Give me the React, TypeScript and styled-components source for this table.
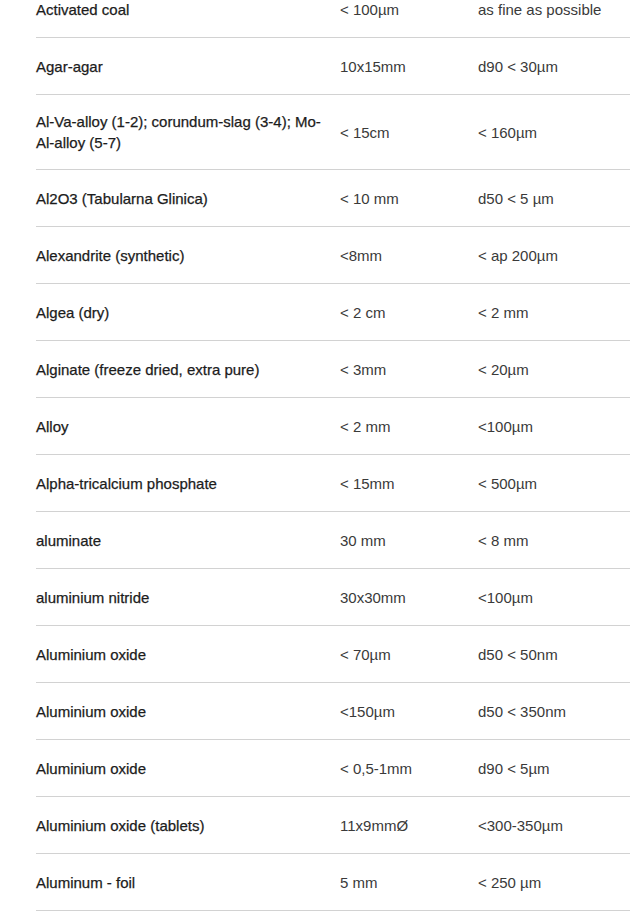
import styled, { createGlobalStyle } from 'styled-components';

type Material = {
  name: string;
  feed: string;
  fineness: string;
};

const materials: Material[] = [
  { name: 'Activated coal', feed: '< 100µm', fineness: 'as fine as possible' },
  { name: 'Agar-agar', feed: '10x15mm', fineness: 'd90 < 30µm' },
  { name: 'Al-Va-alloy (1-2); corundum-slag (3-4); Mo-Al-alloy (5-7)', feed: '< 15cm', fineness: '< 160µm' },
  { name: 'Al2O3 (Tabularna Glinica)', feed: '< 10 mm', fineness: 'd50 < 5 µm' },
  { name: 'Alexandrite (synthetic)', feed: '<8mm', fineness: '< ap 200µm' },
  { name: 'Algea (dry)', feed: '< 2 cm', fineness: '< 2 mm' },
  { name: 'Alginate (freeze dried, extra pure)', feed: '< 3mm', fineness: '< 20µm' },
  { name: 'Alloy', feed: '< 2 mm', fineness: '<100µm' },
  { name: 'Alpha-tricalcium phosphate', feed: '< 15mm', fineness: '< 500µm' },
  { name: 'aluminate', feed: '30 mm', fineness: '< 8 mm' },
  { name: 'aluminium nitride', feed: '30x30mm', fineness: '<100µm' },
  { name: 'Aluminium oxide', feed: '< 70µm', fineness: 'd50 < 50nm' },
  { name: 'Aluminium oxide', feed: '<150µm', fineness: 'd50 < 350nm' },
  { name: 'Aluminium oxide', feed: '< 0,5-1mm', fineness: 'd90 < 5µm' },
  { name: 'Aluminium oxide (tablets)', feed: '11x9mmØ', fineness: '<300-350µm' },
  { name: 'Aluminum - foil', feed: '5 mm', fineness: '< 250 µm' },
];

const GlobalStyle = createGlobalStyle`
  html, body {
    margin: 0;
    padding: 0;
    background: #ffffff;
    overflow: hidden;
  }
  body {
    font-family: 'Liberation Sans', Arial, sans-serif;
  }
`;

const App = () => {
  return (
    <>
      <GlobalStyle />
      <Table>
        {materials.map((item, index) => (
          <Row key={index}>
            <NameCell>{item.name}</NameCell>
            <ValueCell>{item.feed}</ValueCell>
            <ValueCell>{item.fineness}</ValueCell>
          </Row>
        ))}
      </Table>
    </>
  );
};

export default App;

const Table = styled.div`
  margin-top: -19px;
  padding-left: 36px;
  display: flex;
  flex-direction: column;
`;

const Row = styled.div`
  display: grid;
  grid-template-columns: 304px 138px 1fr;
  border-bottom: 1px solid #d2d2d2;
  min-height: 56px;
`;

const Cell = styled.div`
  display: flex;
  align-items: center;
  padding: 16px 10px 16px 0;
  font-size: 15px;
  line-height: 21px;
`;

const NameCell = styled(Cell)`
  color: #1c1c1c;
  -webkit-text-stroke: 0.25px #1c1c1c;
`;

const ValueCell = styled(Cell)`
  color: #3a3a3a;
  white-space: nowrap;
`;
